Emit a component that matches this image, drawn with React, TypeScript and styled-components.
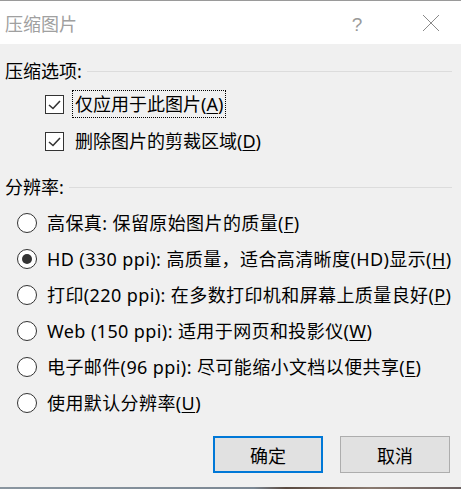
import React from "react";
import styled, { createGlobalStyle } from "styled-components";

const Global = createGlobalStyle`
  html, body { margin: 0; padding: 0; background: #f0f0f0; }
  body { font-family: "Noto Sans", "Noto Sans CJK SC", sans-serif; }
`;

const Window = styled.div`
  width: 461px;
  height: 489px;
  display: flex;
  flex-direction: column;
  background: #f0f0f0;
  border-top: 1px solid #9a9a9a;
  box-sizing: border-box;
  overflow: hidden;
`;

const TitleBar = styled.div`
  height: 43px;
  background: #ffffff;
  display: flex;
  align-items: center;
  padding-left: 5px;
  flex-shrink: 0;
`;

const Title = styled.div`
  font-family: "Noto Sans CJK SC", sans-serif;
  font-size: 18px;
  color: #a0a0a0;
  flex: 1;
  line-height: 24px;
`;

const Help = styled.div`
  width: 20px;
  text-align: center;
  font-family: "Liberation Sans", sans-serif;
  font-size: 19px;
  color: #9a9a9a;
  margin-right: 55px;
  margin-top: 4px;
`;

const Close = styled.div`
  width: 18px;
  height: 18px;
  margin-right: 21px;
  display: flex;
`;

const Body = styled.div`
  flex: 1;
  display: flex;
  flex-direction: column;
  padding: 14px 9px 0 5px;
`;

const SectionHeader = styled.div<{ $mt?: number }>`
  display: flex;
  align-items: center;
  height: 24px;
  margin-top: ${(p) => p.$mt ?? 0}px;
  font-size: 18px;
  color: #000;
`;

const HeaderRule = styled.div`
  flex: 1;
  height: 1px;
  background: #dcdcdc;
  margin-left: 5px;
  margin-top: 2px;
`;

const CheckRow = styled.div<{ $mt: number }>`
  display: flex;
  align-items: center;
  height: 30px;
  margin-top: ${(p) => p.$mt}px;
  padding-left: 40px;
`;

const Box = styled.div`
  width: 19px;
  height: 19px;
  box-sizing: border-box;
  border: 1px solid #333;
  background: #fff;
  display: flex;
  align-items: center;
  justify-content: center;
  flex-shrink: 0;
`;

const Label = styled.div<{ $focus?: boolean; $gap: number; $spacing?: number }>`
  margin-left: ${(p) => p.$gap}px;
  font-size: 18px;
  line-height: 24px;
  letter-spacing: ${(p) => p.$spacing ?? 0}px;
  color: #000;
  white-space: nowrap;
  padding: 1px 2px;
  border: 1px dotted ${(p) => (p.$focus ? "#000" : "transparent")};
`;

const Key = styled.span`
  text-decoration: underline;
  text-underline-offset: 2px;
  text-decoration-thickness: 1px;
`;

const RadioRow = styled.div<{ $mt: number }>`
  display: flex;
  align-items: center;
  height: 30px;
  margin-top: ${(p) => p.$mt}px;
  padding-left: 12px;
`;

const Circle = styled.div`
  width: 20px;
  height: 20px;
  box-sizing: border-box;
  border: 1px solid #333;
  border-radius: 50%;
  background: #fff;
  display: flex;
  align-items: center;
  justify-content: center;
  flex-shrink: 0;
`;

const Dot = styled.div`
  width: 10px;
  height: 10px;
  border-radius: 50%;
  background: #333;
`;

const ButtonRow = styled.div`
  display: flex;
  justify-content: flex-end;
  gap: 17px;
  margin-top: 18px;
  padding-right: 2px;
`;

const Button = styled.div<{ $default?: boolean }>`
  width: 110px;
  height: 37px;
  box-sizing: border-box;
  background: #e1e1e1;
  border: ${(p) => (p.$default ? "2px solid #0078d7" : "1px solid #adadad")};
  display: flex;
  align-items: center;
  justify-content: center;
  font-family: "Noto Sans CJK SC", sans-serif;
  font-size: 18px;
  color: #000;
`;

const BottomStrip = styled.div`
  height: 2px;
  background: linear-gradient(90deg, #8a96a0 0%, #7c8894 55%, #5a4a40 62%, #8a7a70 80%, #6a6060 100%);
  flex-shrink: 0;
`;

const Check = () => (
  <svg width="15" height="13" viewBox="0 0 15 13">
    <path d="M2 7 L6 10.5 L13 3" fill="none" stroke="#333" strokeWidth="1.6" />
  </svg>
);

const radios = [
  { text: "高保真: 保留原始图片的质量(", key: "F", sel: false },
  { text: "HD (330 ppi): 高质量，适合高清晰度(HD)显示(", key: "H", sel: true },
  { text: "打印(220 ppi): 在多数打印机和屏幕上质量良好(", key: "P", sel: false },
  { text: "Web (150 ppi): 适用于网页和投影仪(", key: "W", sel: false },
  { text: "电子邮件(96 ppi): 尽可能缩小文档以便共享(", key: "E", sel: false },
  { text: "使用默认分辨率(", key: "U", sel: false },
];

export default function App() {
  return (
    <>
      <Global />
      <Window>
        <TitleBar>
          <Title>压缩图片</Title>
          <Help>?</Help>
          <Close>
            <svg width="18" height="18" viewBox="0 0 18 18">
              <path d="M1 1 L17 17 M17 1 L1 17" stroke="#8a8a8a" strokeWidth="1" />
            </svg>
          </Close>
        </TitleBar>
        <Body>
          <SectionHeader>
            压缩选项:
            <HeaderRule />
          </SectionHeader>
          <CheckRow $mt={7}>
            <Box><Check /></Box>
            <Label $focus $gap={8}>仅应用于此图片(<Key>A</Key>)</Label>
          </CheckRow>
          <CheckRow $mt={7}>
            <Box><Check /></Box>
            <Label $gap={8}>删除图片的剪裁区域(<Key>D</Key>)</Label>
          </CheckRow>
          <SectionHeader $mt={18}>
            分辨率:
            <HeaderRule />
          </SectionHeader>
          {radios.map((r, i) => (
            <RadioRow key={r.key} $mt={i === 0 ? 10 : 6}>
              <Circle>{r.sel && <Dot />}</Circle>
              <Label $gap={7} $spacing={0.4}>
                {r.text}
                <Key>{r.key}</Key>)
              </Label>
            </RadioRow>
          ))}
          <ButtonRow>
            <Button $default>确定</Button>
            <Button>取消</Button>
          </ButtonRow>
        </Body>
        <BottomStrip />
      </Window>
    </>
  );
}
